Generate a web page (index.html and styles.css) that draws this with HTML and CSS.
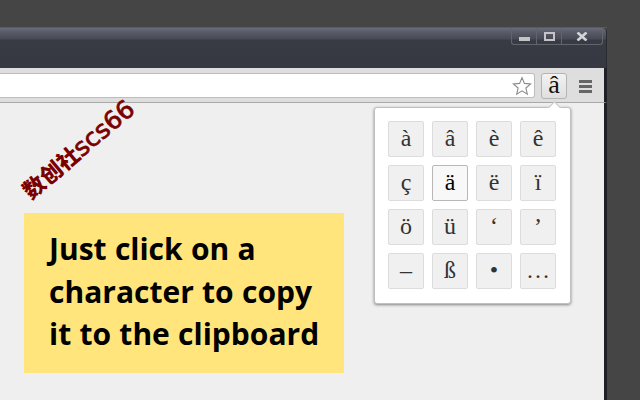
FILE: index.html
```
<!DOCTYPE html>
<html lang="en">
<head>
<meta charset="utf-8">
<title>Special characters</title>
<link rel="stylesheet" href="styles.css">
</head>
<body>
<div class="window">
  <div class="frame">
    <div class="caps">
      <div class="cap cap-min"><span class="min-glyph"></span></div>
      <div class="cap cap-max"><span class="max-glyph"></span></div>
      <div class="cap cap-close">
        <svg width="12" height="9" viewBox="0 0 12 9"><path d="M1.5 .5 L10.5 8.5 M10.5 .5 L1.5 8.5" stroke="#d4d4d8" stroke-width="2.6" fill="none"/></svg>
      </div>
    </div>
  </div>
  <div class="toolbar">
    <div class="omnibox">
      <svg class="star" width="20" height="20" viewBox="0 0 20 20"><path d="M10 1.6 L12.4 7.4 L18.6 7.9 L13.9 12 L15.3 18.2 L10 14.9 L4.7 18.2 L6.1 12 L1.4 7.9 L7.6 7.4 Z" fill="#fff" stroke="#8a8a8a" stroke-width="1.1"/></svg>
    </div>
    <div class="ext-btn">â</div>
    <div class="menu"><span></span><span></span><span></span></div>
  </div>
  <div class="content">
    <div class="note">Just click on a character to copy it to the clipboard</div>
  </div>
</div>
<div class="watermark">数创社<span class="wm-latin">scs66</span></div>
<div class="popup">
  <div class="arrow"></div>
  <div class="tile">à</div>
  <div class="tile">â</div>
  <div class="tile">è</div>
  <div class="tile">ê</div>
  <div class="tile">ç</div>
  <div class="tile tile-active">ä</div>
  <div class="tile">ë</div>
  <div class="tile">ï</div>
  <div class="tile">ö</div>
  <div class="tile">ü</div>
  <div class="tile">‘</div>
  <div class="tile">’</div>
  <div class="tile">–</div>
  <div class="tile">ß</div>
  <div class="tile">•</div>
  <div class="tile">…</div>
</div>
</body>
</html>
```
FILE: styles.css
```
html, body {
  margin: 0;
  padding: 0;
  height: 400px;
  overflow: hidden;
  background: #454545;
}
.window {
  width: 607px;
  height: 373px;
  margin-top: 27px;
  display: flex;
  flex-direction: column;
  border-top: 1px solid #5a5a5e;
  box-sizing: border-box;
}
.frame {
  height: 40px;
  flex: none;
  background: linear-gradient(#6a6d79 0, #5c5f6b 3px, #474954 11px, #393b44 12px, #373942 40px);
  border-top-right-radius: 4px;
  box-shadow: inset -1px 0 0 #2a2b30;
}
.caps {
  display: flex;
  justify-content: flex-end;
  margin-right: 4px;
  height: 17px;
}
.cap {
  height: 17px;
  box-sizing: border-box;
  border-left: 1px solid #62646d;
  border-bottom: 1px solid #62646d;
  display: flex;
  align-items: center;
  justify-content: center;
}
.cap-min {
  width: 25px;
  border-bottom-left-radius: 3px;
}
.cap-max { width: 25px; }
.cap-close {
  width: 42px;
  border-right: 1px solid #62646d;
  border-bottom-right-radius: 3px;
}
.min-glyph {
  width: 11px;
  height: 4px;
  margin-top: 5px;
  background: #c4c4c8;
}
.max-glyph {
  width: 11px;
  height: 9px;
  box-sizing: border-box;
  border: 2px solid #c4c4c8;
}
.toolbar {
  height: 35px;
  flex: none;
  box-sizing: border-box;
  background: #dedede;
  border-right: 3px solid #1f2026;
  border-bottom: 1px solid #a8a8a8;
  padding-top: 5px;
  display: flex;
  align-items: flex-start;
}
.omnibox {
  width: 535px;
  height: 25px;
  flex: none;
  box-sizing: border-box;
  background: #fff;
  border: 1px solid #bdbdbd;
  border-left: 0;
  border-radius: 0 3px 3px 0;
  display: flex;
  justify-content: flex-end;
  padding: 2px 2px 0 0;
}
.ext-btn {
  width: 26px;
  height: 26px;
  flex: none;
  margin-left: 6px;
  box-sizing: border-box;
  border: 1px solid #b4b4b4;
  border-radius: 3px;
  background: linear-gradient(#f2f2f2, #dfdfdf);
  font: 26px/22px "Liberation Serif", serif;
  color: #111;
  text-align: center;
}
.menu {
  margin: 7px 0 0 12px;
  width: 13px;
  display: flex;
  flex-direction: column;
  gap: 2px;
}
.menu span {
  height: 3px;
  background: #666;
}
.content {
  flex: 1;
  box-sizing: border-box;
  background: #efefef;
  border-right: 3px solid #1f2026;
  padding: 110px 0 0 24px;
}
.note {
  width: 320px;
  height: 160px;
  box-sizing: border-box;
  padding: 15px 16px 0 25px;
  background: #ffe57c;
  color: #000;
  font: 700 30px/42.5px "Open Sans", sans-serif;
  word-spacing: .5px;
}
.watermark {
  position: absolute;
  left: 3px;
  top: 135px;
  width: 150px;
  text-align: center;
  white-space: nowrap;
  color: #7a0000;
  font: 900 22px/26px "Noto Sans CJK SC", sans-serif;
  transform: rotate(-40deg);
}
.wm-latin {
  font: 400 25px/26px "DejaVu Sans", sans-serif;
  -webkit-text-stroke: .7px #7a0000;
}
.popup {
  position: absolute;
  left: 374px;
  top: 107px;
  width: 197px;
  height: 197px;
  box-sizing: border-box;
  padding: 13px;
  background: #fff;
  border: 1px solid #c0c0c0;
  border-radius: 3px;
  box-shadow: 0 1px 3px rgba(0, 0, 0, .45);
  display: grid;
  grid-template-columns: repeat(4, 36px);
  grid-auto-rows: 36px;
  gap: 8px;
}
.arrow {
  position: absolute;
  left: 175px;
  top: -5px;
  width: 8px;
  height: 8px;
  background: #fff;
  border-top: 1px solid #c0c0c0;
  border-left: 1px solid #c0c0c0;
  transform: rotate(45deg);
}
.tile {
  box-sizing: border-box;
  border: 1px solid #dcdcdc;
  border-radius: 2px;
  background: #f0f0f0;
  color: #333;
  font: 24px/32px "Liberation Serif", serif;
  text-align: center;
}
.tile-active {
  background: #f8f8f8;
  border-color: #b8b8b8;
  color: #000;
}
```
